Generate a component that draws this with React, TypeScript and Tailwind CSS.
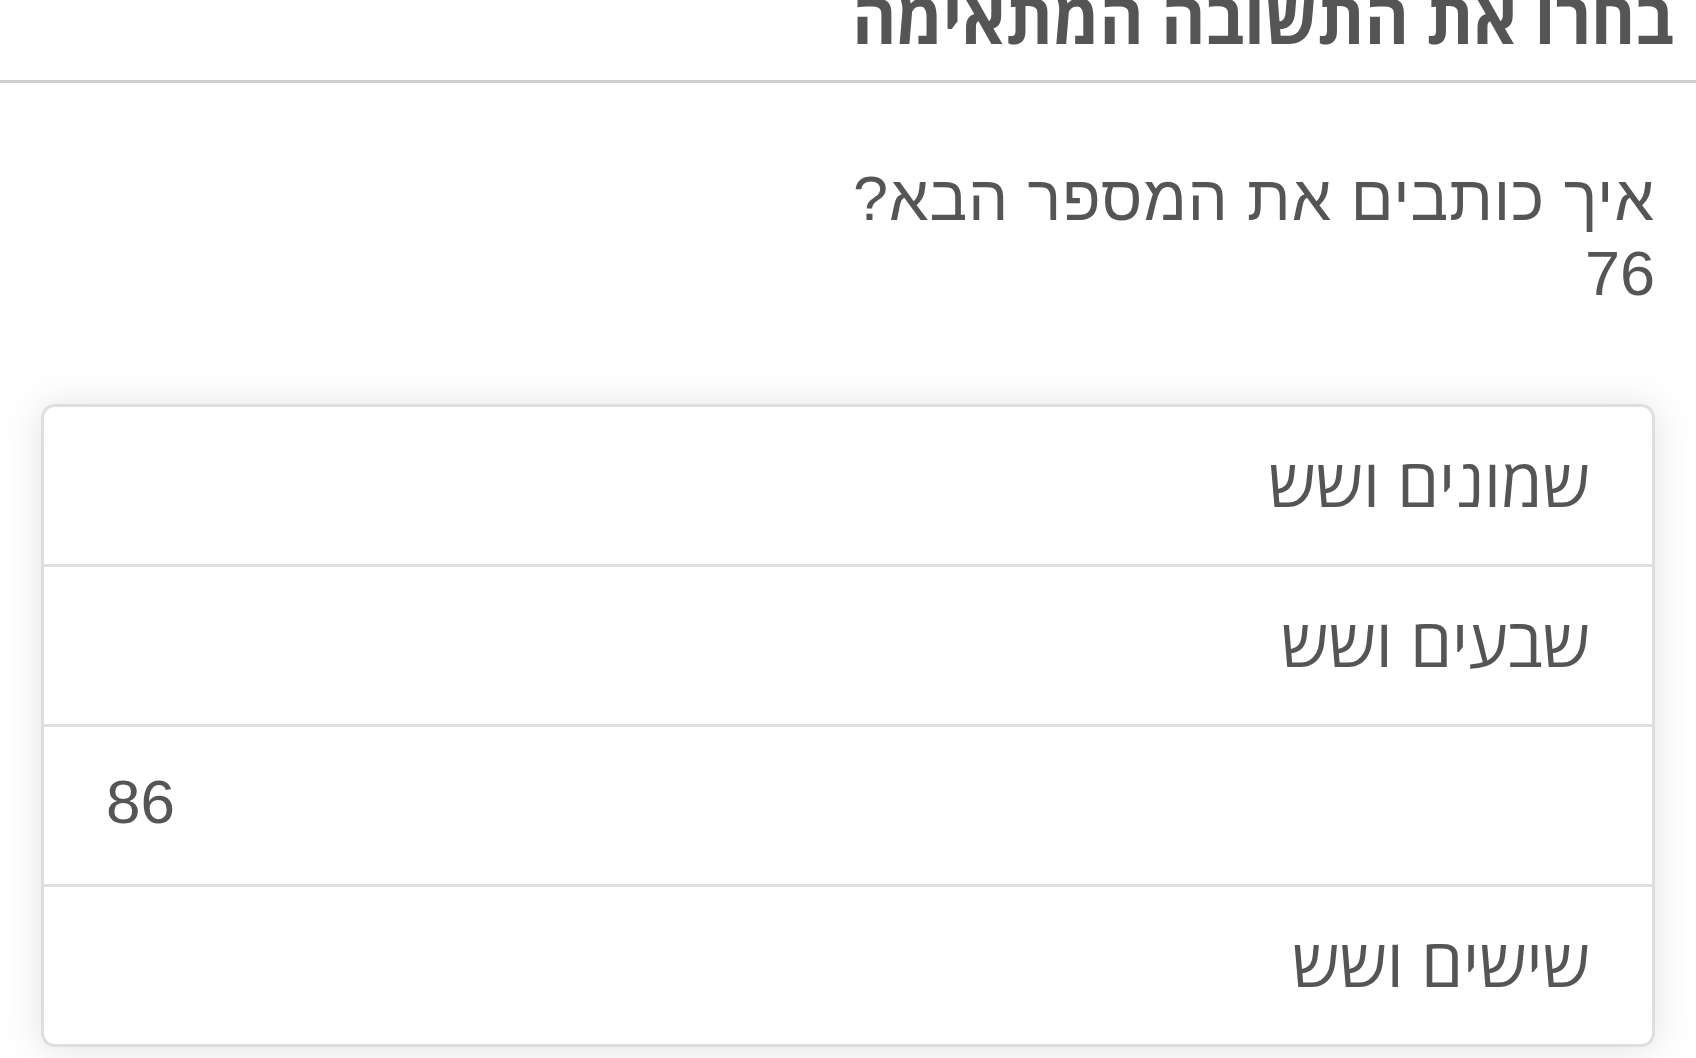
import React from "react";

const options = [
  { label: "שמונים ושש", ltr: false },
  { label: "שבעים ושש", ltr: false },
  { label: "86", ltr: true },
  { label: "שישים ושש", ltr: false },
];

export default function App() {
  return (
    <div dir="rtl" className="min-h-screen bg-white text-[#555] overflow-hidden">
      <div className="h-[83px] border-b-[3px] border-[#cfcfcf] overflow-hidden relative">
        <h1
          className="absolute right-[22px] bottom-[28px] whitespace-nowrap text-[72px] leading-none font-bold origin-right scale-x-[0.935]"
          style={{ fontFamily: '"Open Sans", "DejaVu Sans", sans-serif' }}
        >
          בחרו את התשובה המתאימה
        </h1>
      </div>

      <div className="px-[41px]">
        <p
          className="mt-[78px] text-[63px] leading-[75px]"
          style={{ fontFamily: '"Liberation Sans", Arial, sans-serif' }}
        >
          <span className="tracking-[1px]">איך כותבים את המספר הבא?</span>
          <br />
          76
        </p>

        <ul className="mt-[93px] rounded-[14px] border-[3px] border-[#dedede] bg-white shadow-[0_2px_40px_rgba(0,0,0,0.12)] overflow-hidden">
          {options.map((o, i) => (
            <li
              key={i}
              className={
                "flex items-center px-[62px] pb-[8px] leading-none " +
                (i < options.length - 1 ? "h-[160px] border-b-[3px] border-[#dedede]" : "h-[157px]")
              }
            >
              {o.ltr ? (
                <span
                  dir="ltr"
                  className="w-full text-left text-[62px]"
                  style={{ fontFamily: '"Liberation Sans", Arial, sans-serif' }}
                >
                  {o.label}
                </span>
              ) : (
                <span
                  className="text-[67px]"
                  style={{ fontFamily: '"Open Sans", "DejaVu Sans", sans-serif' }}
                >
                  {o.label}
                </span>
              )}
            </li>
          ))}
        </ul>
      </div>
    </div>
  );
}
